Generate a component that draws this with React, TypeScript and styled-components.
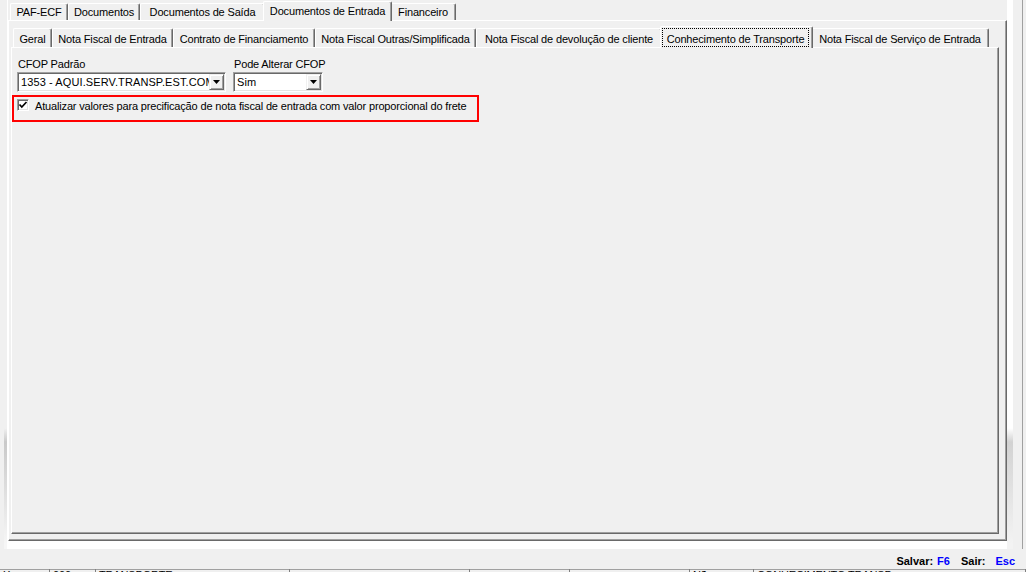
import React from "react";
import styled, { createGlobalStyle } from "styled-components";

const GlobalStyle = createGlobalStyle`
  html, body { margin: 0; padding: 0; background: #f0f0f0; }
  body {
    font-family: "Liberation Sans", Arial, sans-serif;
    font-size: 11px;
    letter-spacing: -0.16px;
    color: #000;
  }
`;

const Screen = styled.div`
  width: 1026px;
  height: 572px;
  overflow: hidden;
  display: flex;
  flex-direction: column;
  background: #f0f0f0;
`;

const TopArea = styled.div`
  height: 549px;
  display: flex;
  flex-shrink: 0;
`;

const Gutter = styled.div<{ $w: number }>`
  width: ${(p) => p.$w}px;
  flex-shrink: 0;
`;

const LeftEdge = styled.div`
  width: 3px;
  flex-shrink: 0;
  border-right: 1px solid #ffffff;
  background: linear-gradient(
    to bottom,
    #f0f0f0 0,
    #f0f0f0 78%,
    #c9c9c9 80.5%,
    #f6f6f6 99%
  );
`;

const RightEdge = styled.div`
  width: 6px;
  flex-shrink: 0;
  background: linear-gradient(
    to bottom,
    #ffffff 0,
    #ffffff 78%,
    #d2d2d2 80.5%,
    #f3f3f3 99%
  );
`;

const WindowLine = styled.div`
  width: 1px;
  flex-shrink: 0;
  background: #a0a0a0;
`;

const MainColumn = styled.div`
  width: 999px;
  flex-shrink: 0;
  display: flex;
  flex-direction: column;
`;

const BottomWhite = styled.div`
  height: 8px;
  flex-shrink: 0;
  background: #ffffff;
`;

const PageControl = styled.div`
  flex: 1;
  display: flex;
  flex-direction: column;
  min-height: 0;
`;

const TabStrip = styled.div<{ $h: number }>`
  height: ${(p) => p.$h}px;
  flex-shrink: 0;
  display: flex;
  align-items: flex-end;
  padding-left: 2px;
`;

const Tab = styled.div<{ $w: number; $h: number; $pt: number; $active?: boolean }>`
  position: relative;
  z-index: ${(p) => (p.$active ? 3 : 1)};
  box-sizing: border-box;
  flex-shrink: 0;
  width: ${(p) => (p.$active ? p.$w + 4 : p.$w)}px;
  height: ${(p) => (p.$active ? p.$h + 3 : p.$h)}px;
  margin: 0 ${(p) => (p.$active ? -2 : 0)}px ${(p) => (p.$active ? -1 : 0)}px;
  padding-top: ${(p) => p.$pt}px;
  background: #f0f0f0;
  border-top: 1px solid #ffffff;
  border-left: 1px solid #ffffff;
  border-right: 1px solid #696969;
  border-radius: 2px 2px 0 0;
  box-shadow: inset -1px 0 0 #a0a0a0;
  line-height: 13px;
  text-align: center;
  white-space: nowrap;
`;

const ActiveInner = styled.div`
  box-sizing: border-box;
  height: 100%;
  padding: 1px 3px 1px 1px;
`;

const FocusBox = styled.div`
  box-sizing: border-box;
  height: 100%;
  border: 1px dotted #000;
  padding-top: 4px;
  line-height: 13px;
  text-align: center;
`;

const Sheet = styled.div<{ $pad: string }>`
  flex: 1;
  min-height: 0;
  box-sizing: border-box;
  display: flex;
  flex-direction: column;
  background: #f0f0f0;
  border-top: 1px solid #ffffff;
  border-left: 1px solid #ffffff;
  border-right: 1px solid #696969;
  border-bottom: 1px solid #696969;
  box-shadow: inset -1px -1px 0 #a0a0a0;
  padding: ${(p) => p.$pad};
`;

const FieldsRow = styled.div`
  display: flex;
  gap: 7px;
  padding-left: 5px;
`;

const Field = styled.div`
  display: flex;
  flex-direction: column;
`;

const FieldLabel = styled.div`
  height: 13px;
  line-height: 13px;
  padding-left: 1px;
  white-space: nowrap;
`;

const Combo = styled.div<{ $w: number }>`
  box-sizing: border-box;
  width: ${(p) => p.$w}px;
  height: 20px;
  margin-top: 1px;
  display: flex;
  align-items: stretch;
  background: #ffffff;
  border: 1px solid;
  border-color: #a0a0a0 #ffffff #ffffff #a0a0a0;
  box-shadow: inset 1px 1px 0 #696969, inset -1px -1px 0 #e3e3e3;
  padding: 1px;
`;

const ComboText = styled.div`
  flex: 1;
  min-width: 0;
  overflow: hidden;
  white-space: nowrap;
  line-height: 16px;
  padding-left: 2px;
  letter-spacing: 0.1px;
`;

const ComboButton = styled.div`
  box-sizing: border-box;
  width: 15px;
  flex-shrink: 0;
  display: flex;
  align-items: center;
  justify-content: center;
  background: #f0f0f0;
  border: 1px solid;
  border-color: #f0f0f0 #696969 #696969 #f0f0f0;
  box-shadow: inset 1px 1px 0 #ffffff, inset -1px -1px 0 #a0a0a0;
`;

const Highlight = styled.div`
  box-sizing: border-box;
  width: 467px;
  height: 27px;
  margin-top: 3px;
  border: 2px solid #ff0000;
`;

const CheckRow = styled.label`
  display: flex;
  align-items: flex-start;
  height: 21px;
  padding-left: 3px;
`;

const CheckBox = styled.span`
  box-sizing: border-box;
  width: 12px;
  height: 12px;
  margin-top: 2px;
  flex-shrink: 0;
  display: flex;
  align-items: center;
  justify-content: center;
  background: #ffffff;
  border: 1px solid;
  border-color: #a0a0a0 #ffffff #ffffff #a0a0a0;
  box-shadow: inset 1px 1px 0 #696969, inset -1px -1px 0 #e3e3e3;
`;

const CheckText = styled.span`
  margin-left: 6px;
  margin-top: 3px;
  line-height: 13px;
  white-space: nowrap;
`;

const StatusBar = styled.div`
  height: 20px;
  flex-shrink: 0;
  box-sizing: border-box;
  display: flex;
  justify-content: flex-end;
  padding: 6px 11px 0 0;
  font-weight: bold;
  letter-spacing: 0;
  line-height: 13px;
`;

const StatusItem = styled.span<{ $key?: boolean; $ml: number }>`
  margin-left: ${(p) => p.$ml}px;
  color: ${(p) => (p.$key ? "#0000ff" : "#000000")};
`;

const GridRow = styled.div`
  display: flex;
  border-top: 1px solid #a0a0a0;
  height: 20px;
  flex-shrink: 0;
`;

const GridCell = styled.div<{ $w: number }>`
  box-sizing: border-box;
  width: ${(p) => p.$w}px;
  flex-shrink: 0;
  border-right: 1px solid #808080;
  padding-left: 3px;
  line-height: 13px;
  white-space: nowrap;
  overflow: hidden;
  margin-top: -1px;
`;

type TabDef = { label: string; w: number; active?: boolean };

const outerTabs: TabDef[] = [
  { label: "PAF-ECF", w: 58 },
  { label: "Documentos", w: 72 },
  { label: "Documentos de Saída", w: 125 },
  { label: "Documentos de Entrada", w: 125, active: true },
  { label: "Financeiro", w: 66 },
];

const innerTabs: TabDef[] = [
  { label: "Geral", w: 39 },
  { label: "Nota Fiscal de Entrada", w: 121 },
  { label: "Contrato de Financiamento", w: 142 },
  { label: "Nota Fiscal Outras/Simplificada", w: 161 },
  { label: "Nota Fiscal de devolução de cliente", w: 186 },
  { label: "Conhecimento de Transporte", w: 149, active: true },
  { label: "Nota Fiscal de Serviço de Entrada", w: 178 },
];

const gridCells = [
  { w: 50, t: "X" },
  { w: 46, t: "000" },
  { w: 194, t: "TRANSPORTE" },
  { w: 180, t: "" },
  { w: 100, t: "" },
  { w: 120, t: "" },
  { w: 64, t: "Não" },
  { w: 272, t: "CONHECIMENTO TRANSP" },
];

const Arrow = () => (
  <svg width="7" height="4" viewBox="0 0 7 4">
    <polygon points="0,0 7,0 3.5,4" fill="#000" />
  </svg>
);

const CheckMark = () => (
  <svg width="10" height="10" viewBox="0 0 10 10">
    <polyline
      points="1.5,4.5 3.8,7 8.5,2"
      fill="none"
      stroke="#000"
      strokeWidth="1.7"
    />
  </svg>
);

export default function App() {
  return (
    <>
      <GlobalStyle />
      <Screen>
        <TopArea>
          <Gutter $w={4} />
          <LeftEdge />
          <MainColumn>
            <PageControl>
              <TabStrip $h={20}>
                {outerTabs.map((t) => (
                  <Tab key={t.label} $w={t.w} $h={17} $pt={t.active ? 3 : 2} $active={t.active}>
                    {t.label}
                  </Tab>
                ))}
              </TabStrip>
              <Sheet $pad="5px 7px 6px 2px">
                <PageControl>
                  <TabStrip $h={21}>
                    {innerTabs.map((t) =>
                      t.active ? (
                        <Tab key={t.label} $w={t.w} $h={19} $pt={0} $active>
                          <ActiveInner>
                            <FocusBox>{t.label}</FocusBox>
                          </ActiveInner>
                        </Tab>
                      ) : (
                        <Tab key={t.label} $w={t.w} $h={19} $pt={4}>
                          {t.label}
                        </Tab>
                      )
                    )}
                  </TabStrip>
                  <Sheet $pad="10px 0 0 0">
                    <FieldsRow>
                      <Field>
                        <FieldLabel>CFOP Padrão</FieldLabel>
                        <Combo $w={209}>
                          <ComboText>1353 - AQUI.SERV.TRANSP.EST.COM</ComboText>
                          <ComboButton>
                            <Arrow />
                          </ComboButton>
                        </Combo>
                      </Field>
                      <Field>
                        <FieldLabel>Pode Alterar CFOP</FieldLabel>
                        <Combo $w={90}>
                          <ComboText>Sim</ComboText>
                          <ComboButton>
                            <Arrow />
                          </ComboButton>
                        </Combo>
                      </Field>
                    </FieldsRow>
                    <Highlight>
                      <CheckRow>
                        <CheckBox>
                          <CheckMark />
                        </CheckBox>
                        <CheckText>
                          Atualizar valores para precificação de nota fiscal de entrada com valor proporcional do frete
                        </CheckText>
                      </CheckRow>
                    </Highlight>
                  </Sheet>
                </PageControl>
              </Sheet>
            </PageControl>
            <BottomWhite />
          </MainColumn>
          <RightEdge />
          <Gutter $w={9} />
          <WindowLine />
          <Gutter $w={3} />
        </TopArea>
        <StatusBar>
          <StatusItem $ml={0}>Salvar:</StatusItem>
          <StatusItem $ml={4} $key>
            F6
          </StatusItem>
          <StatusItem $ml={11}>Sair:</StatusItem>
          <StatusItem $ml={10} $key>
            Esc
          </StatusItem>
        </StatusBar>
        <GridRow>
          {gridCells.map((c, i) => (
            <GridCell key={i} $w={c.w}>
              {c.t}
            </GridCell>
          ))}
        </GridRow>
      </Screen>
    </>
  );
}
